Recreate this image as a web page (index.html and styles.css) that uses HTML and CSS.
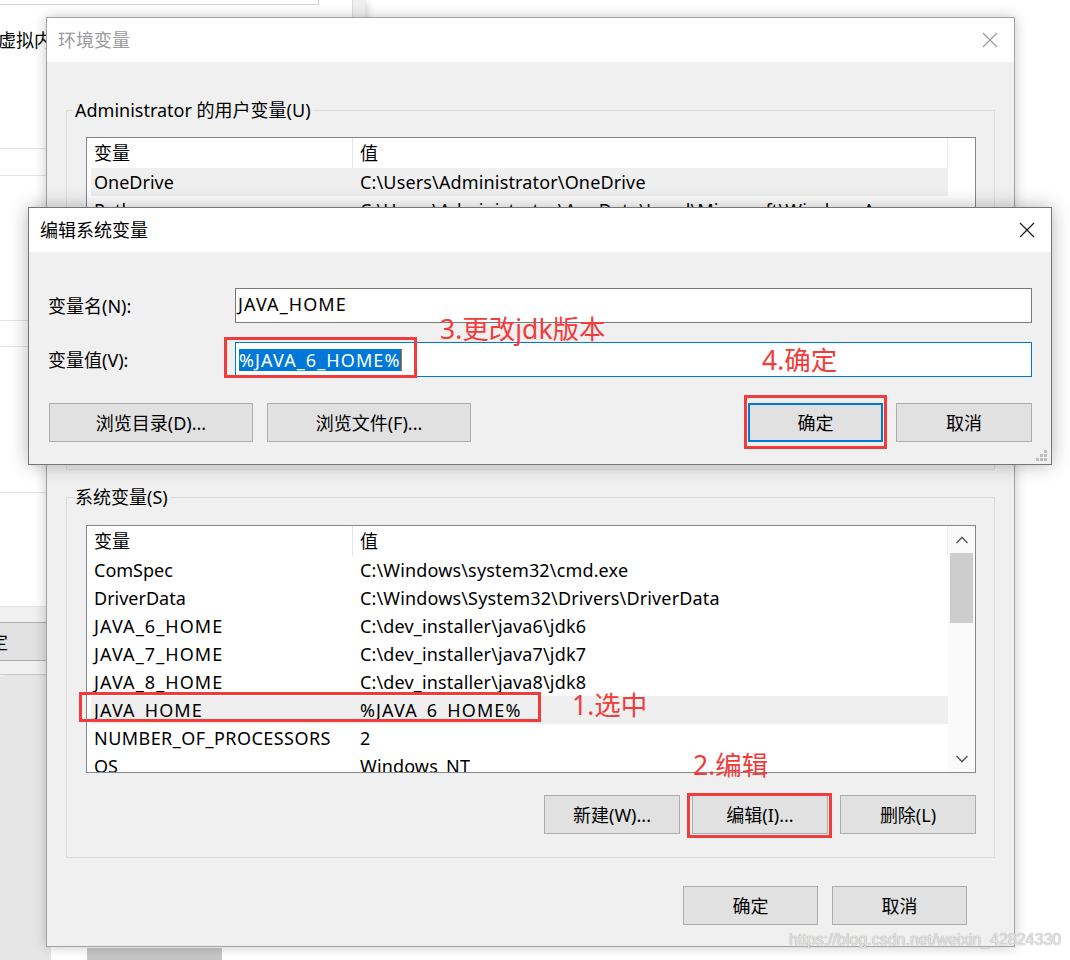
FILE: index.html
```html
<!DOCTYPE html>
<html lang="zh-CN">
<head>
<meta charset="utf-8">
<title>环境变量</title>
<link rel="stylesheet" href="styles.css">
</head>
<body>
<div class="desk">

  <div class="win bgwin">
    <div class="bg-main">
      <div class="bg-topbox"></div>
      <div class="bg-title">虚拟内存</div>
      <div class="bg-sep h96"></div>
      <div class="bg-sep h26"></div>
      <div class="bg-sep h144"></div>
      <div class="bg-sep h25"></div>
      <div class="bg-sep h145"></div>
      <div class="bg-sep h113"></div>
      <div class="bg-foot"><div class="btn bg-btn">确定</div></div>
    </div>
    <div class="bg-strip"></div>
  </div>
  <div class="win bgwin2"></div>
  <div class="win bgwin3"></div>

  <div class="win envwin">
    <div class="titlebar">
      <span class="title dim">环境变量</span>
      <svg class="close" width="16" height="16" viewBox="0 0 16 16"><path d="M1 1L15 15M15 1L1 15" stroke="#9a9a9a" stroke-width="1.1" fill="none"/></svg>
    </div>
    <div class="body envbody">
      <fieldset class="group">
        <legend>Administrator 的用户变量(U)</legend>
        <div class="list">
          <div class="table">
            <div class="row head"><span class="c1">变量</span><span class="c2">值</span></div>
            <div class="row hover"><span class="c1">OneDrive</span><span class="c2">C:\Users\Administrator\OneDrive</span></div>
            <div class="row"><span class="c1">Path</span><span class="c2">C:\Users\Administrator\AppData\Local\Microsoft\WindowsApps;</span></div>
            <div class="row"><span class="c1">TEMP</span><span class="c2">C:\Users\Administrator\AppData\Local\Temp</span></div>
            <div class="row"><span class="c1">TMP</span><span class="c2">C:\Users\Administrator\AppData\Local\Temp</span></div>
          </div>
          <div class="vscroll blank"></div>
        </div>
        <div class="btnrow">
          <div class="btn w136">新建(N)...</div>
          <div class="btn w136">编辑(E)...</div>
          <div class="btn w136">删除(D)</div>
        </div>
      </fieldset>

      <fieldset class="group sys">
        <legend>系统变量(S)</legend>
        <div class="list">
          <div class="table">
            <div class="row head"><span class="c1">变量</span><span class="c2">值</span></div>
            <div class="row"><span class="c1">ComSpec</span><span class="c2">C:\Windows\system32\cmd.exe</span></div>
            <div class="row"><span class="c1">DriverData</span><span class="c2">C:\Windows\System32\Drivers\DriverData</span></div>
            <div class="row"><span class="c1 capj">JAVA_6_HOME</span><span class="c2">C:\dev_installer\java6\jdk6</span></div>
            <div class="row"><span class="c1 capj">JAVA_7_HOME</span><span class="c2">C:\dev_installer\java7\jdk7</span></div>
            <div class="row"><span class="c1 capj">JAVA_8_HOME</span><span class="c2">C:\dev_installer\java8\jdk8</span></div>
            <div class="row hover"><span class="c1 capj">JAVA_HOME</span><span class="c2 capj">%JAVA_6_HOME%</span></div>
            <div class="row"><span class="c1 capn">NUMBER_OF_PROCESSORS</span><span class="c2">2</span></div>
            <div class="row"><span class="c1">OS</span><span class="c2">Windows_NT</span></div>
          </div>
          <div class="vscroll">
            <div class="arrow"><svg width="14" height="8" viewBox="0 0 14 8"><path d="M1.5 7L7 1.5L12.5 7" stroke="#606060" stroke-width="1.6" fill="none"/></svg></div>
            <div class="thumb"></div>
            <div class="track"></div>
            <div class="arrow"><svg width="14" height="8" viewBox="0 0 14 8"><path d="M1.5 1L7 6.5L12.5 1" stroke="#606060" stroke-width="1.6" fill="none"/></svg></div>
          </div>
        </div>
        <div class="btnrow">
          <div class="btn w136">新建(W)...</div>
          <div class="btn w136">编辑(I)...</div>
          <div class="btn w136">删除(L)</div>
        </div>
      </fieldset>

      <div class="envfoot">
        <div class="btn w135">确定</div>
        <div class="btn w135">取消</div>
      </div>
    </div>
  </div>

  <div class="win editwin">
    <div class="titlebar">
      <span class="title">编辑系统变量</span>
      <svg class="close" width="16" height="16" viewBox="0 0 16 16"><path d="M1 1L15 15M15 1L1 15" stroke="#111" stroke-width="1.1" fill="none"/></svg>
    </div>
    <div class="body editbody">
      <div class="field">
        <span class="flabel">变量名(N):</span>
        <div class="input capj">JAVA_HOME</div>
      </div>
      <div class="field f2">
        <span class="flabel">变量值(V):</span>
        <div class="input focus"><span class="sel capj">%JAVA_6_HOME%</span><span class="caret"></span></div>
      </div>
      <div class="ebtns">
        <div class="btn w204">浏览目录(D)...</div>
        <div class="btn w204">浏览文件(F)...</div>
        <span class="spacer"></span>
        <div class="btn w135 default">确定</div>
        <div class="btn w136">取消</div>
      </div>
      <svg class="grip" width="12" height="12" viewBox="0 0 12 12">
        <rect x="8" y="0" width="3" height="3" fill="#bdbdbd"/>
        <rect x="4" y="4" width="3" height="3" fill="#bdbdbd"/>
        <rect x="8" y="4" width="3" height="3" fill="#bdbdbd"/>
        <rect x="0" y="8" width="3" height="3" fill="#bdbdbd"/>
        <rect x="4" y="8" width="3" height="3" fill="#bdbdbd"/>
        <rect x="8" y="8" width="3" height="3" fill="#bdbdbd"/>
      </svg>
    </div>
  </div>

  <div class="mark box1"></div>
  <div class="mark box2"></div>
  <div class="mark box3"></div>
  <div class="mark box4"></div>
  <div class="note n3">3.更改jdk版本</div>
  <div class="note n4">4.确定</div>
  <div class="note n1">1.选中</div>
  <div class="note n2">2.编辑</div>
  <div class="watermark">https://blog.csdn.net/weixin_42824330</div>
</div>
</body>
</html>
```
FILE: styles.css
```css
* { box-sizing: border-box; }
html, body { margin: 0; padding: 0; }
body {
  background: #ffffff;
  font-family: "Noto Sans", "Noto Sans CJK SC", sans-serif;
  font-size: 18px;
  color: #000;
}
.desk {
  position: relative;
  width: 1070px;
  height: 960px;
  overflow: hidden;
  background: #fff;
}

.win { position: absolute; }

/* background window */
.bgwin {
  left: 0; top: 0;
  width: 365px; height: 675px;
  display: grid;
  grid-template-columns: 352px 13px;
  background: #fff;
  border-bottom: 1px solid #c8c8c8;
  box-shadow: 2px 2px 8px rgba(0,0,0,0.18);
}
.bg-main { display: flex; flex-direction: column; }
.bg-topbox {
  width: 319px; height: 5px;
  border-right: 1px solid #d0d0d0;
  border-bottom: 1px solid #d0d0d0;
}
.bg-title {
  margin-top: 23px;
  margin-left: -2px;
  height: 24px; line-height: 24px;
  white-space: nowrap;
}
.bg-sep { border-bottom: 1px solid #e4e4e4; }
.h96 { height: 97px; }
.h26 { height: 27px; }
.h144 { height: 145px; }
.h25 { height: 26px; }
.h145 { height: 146px; }
.h113 { height: 114px; }
.bg-foot {
  flex: 1;
  background: #f0f0f0;
  padding-top: 15px;
}
.bg-btn { width: 140px; margin-left: -80px; height: 39px; }
.bg-strip { background: #efefef; border-left: 1px solid #dadada; }
.bgwin2 { left: 0; top: 676px; width: 51px; height: 284px; background: #e6e6e6; }
.bgwin3 { left: 87px; top: 948px; width: 135px; height: 12px; background: #c6c6c6; }

/* common window parts */
.titlebar {
  height: 44px;
  background: #fff;
  display: flex;
  align-items: center;
  padding-left: 11px;
}
.title { flex: 1; line-height: 24px; white-space: nowrap; }
.title.dim { color: #9b9b9b; }
.close { margin-right: 16px; flex: none; }
.body { background: #f0f0f0; }

.btn {
  height: 39px;
  background: #e1e1e1;
  border: 1px solid #adadad;
  display: flex;
  align-items: center;
  justify-content: center;
  line-height: 24px;
  white-space: nowrap;
  flex: none;
}
.w135 { width: 135px; }
.w136 { width: 136px; }
.w204 { width: 204px; }
.btn.default { border: 2px solid #0078d7; }

/* Latin capitals of the Windows UI font are wider */
.capj { letter-spacing: 1.1px; }
.capn { letter-spacing: 0.45px; }

/* environment window */
.envwin {
  left: 46px; top: 17px;
  width: 969px; height: 930px;
  border: 1px solid #a3a3a3;
  background: #f0f0f0;
  box-shadow: 0 0 12px rgba(0,0,0,0.22);
  display: flex;
  flex-direction: column;
}
.envbody {
  flex: 1;
  padding: 36px 19px 0 19px;
}
.group {
  margin: 0;
  border: 1px solid #dcdcdc;
  padding: 15px 18px 23px 19px;
  min-width: 0;
}
.group legend {
  margin-left: -13px;
  padding: 0 2px;
  height: 24px;
  line-height: 24px;
  white-space: nowrap;
}
.group.sys { margin-top: 15px; padding-top: 16px; }

.list {
  height: 248px;
  border: 1px solid #828790;
  background: #fff;
  display: flex;
  overflow: hidden;
}
.table { width: 861px; flex: none; overflow: hidden; }
.row {
  display: flex;
  height: 28px;
  line-height: 28px;
  margin-left: 4px;
  white-space: nowrap;
}
.row .c1 { width: 262px; padding-left: 3px; flex: none; overflow: hidden; }
.row .c2 { padding-left: 7px; flex: 1; overflow: hidden; letter-spacing: 0.15px; }
.row .c2.capj { letter-spacing: 1.1px; }
.row.hover { background: #efefef; }
.row.head {
  height: 30px;
  line-height: 30px;
  margin-left: 0;
  border-right: 1px solid #ececec;
}
.row.head .c1 { width: 266px; padding-left: 7px; border-right: 1px solid #e5e5e5; }

.vscroll {
  width: 27px;
  flex: none;
  background: #fafafa;
  display: flex;
  flex-direction: column;
  align-items: center;
}
.vscroll.blank { background: #fff; }
.arrow {
  height: 27px;
  width: 100%;
  display: flex;
  align-items: center;
  justify-content: center;
}
.thumb {
  width: 23px;
  height: 70px;
  background: #cdcdcd;
}
.track { flex: 1; }

.btnrow {
  margin-top: 22px;
  display: flex;
  justify-content: flex-end;
  gap: 12px;
}
.envfoot {
  margin-top: 28px;
  padding-right: 28px;
  display: flex;
  justify-content: flex-end;
  gap: 14px;
}

/* edit dialog */
.editwin {
  left: 28px; top: 207px;
  width: 1024px; height: 258px;
  border: 1px solid #767676;
  background: #f0f0f0;
  box-shadow: 0 0 18px rgba(0,0,0,0.28);
  display: flex;
  flex-direction: column;
}
.editbody {
  flex: 1;
  padding: 36px 19px 0 19px;
  display: flex;
  flex-direction: column;
  position: relative;
}
.field { display: flex; align-items: center; height: 35px; }
.field.f2 { margin-top: 19px; }
.flabel { width: 187px; flex: none; line-height: 24px; white-space: nowrap; }
.input {
  flex: 1;
  height: 35px;
  border: 1px solid #7a7a7a;
  background: #fff;
  padding-left: 2px;
  padding-bottom: 3px;
  display: flex;
  align-items: center;
  line-height: 24px;
  white-space: nowrap;
}
.input.focus { border-color: #0078d7; padding-left: 3px; padding-bottom: 0; }
.sel {
  background: #0078d7;
  color: #fff;
  height: 22px;
  line-height: 22px;
}
.caret { width: 1px; height: 22px; background: #d46a00; }
.ebtns {
  margin-top: 26px;
  display: flex;
  gap: 14px;
  padding-left: 1px;
}
.ebtns .spacer { flex: 1; }
.ebtns .w135 + .w136 { margin-left: -1px; }
.grip { position: absolute; right: 3px; bottom: 2px; }

/* annotations */
.mark {
  position: absolute;
  border: 3px solid #f23b3b;
}
.box1 { left: 224px; top: 337px; width: 193px; height: 41px; }
.box2 { left: 744px; top: 395px; width: 143px; height: 54px; }
.box3 { left: 79px; top: 692px; width: 462px; height: 30px; }
.box4 { left: 687px; top: 793px; width: 145px; height: 45px; }
.note {
  position: absolute;
  color: #f23b3b;
  font-size: 26.5px;
  line-height: 30px;
  white-space: nowrap;
}
.n3 { left: 440px; top: 314px; }
.n4 { left: 762px; top: 345px; }
.n1 { left: 572px; top: 690px; }
.n2 { left: 693px; top: 750px; }
.watermark {
  position: absolute;
  left: 789px;
  top: 930px;
  font-family: "Liberation Sans", Arial, sans-serif;
  font-size: 16px;
  line-height: 20px;
  color: #e4e4e4;
  text-shadow: 0 0 1px #8a8a8a;
  white-space: nowrap;
}
```
